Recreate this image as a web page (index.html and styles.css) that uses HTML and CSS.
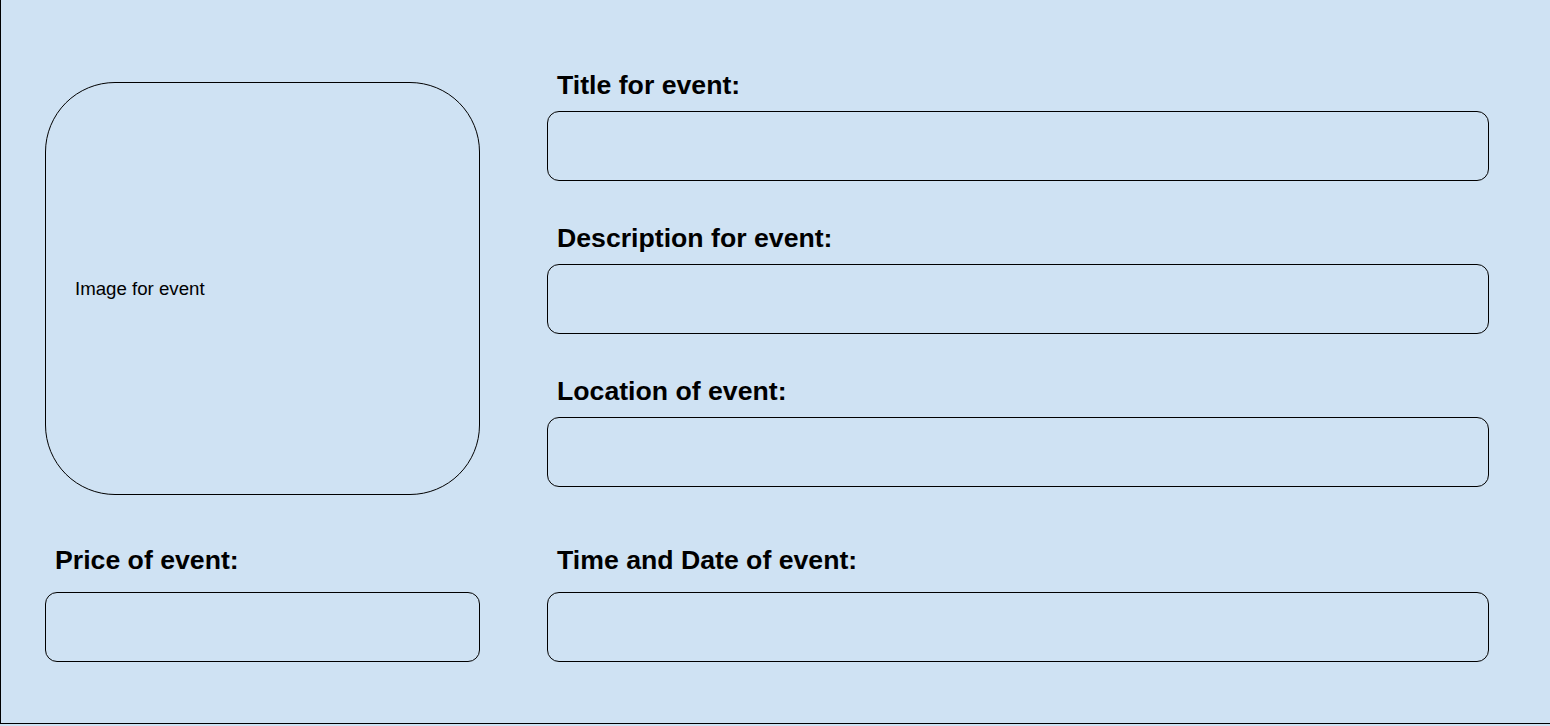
FILE: index.html
```html
<!DOCTYPE html>
<html lang="en">
<head>
<meta charset="utf-8">
<title>Create event</title>
<link rel="stylesheet" href="styles.css">
</head>
<body>
<main class="canvas">
  <div class="layout">
    <div class="image-box"><span class="image-text">Image for event</span></div>
    <div class="fields">
      <div class="field">
        <div class="label">Title for event:</div>
        <div class="box"></div>
      </div>
      <div class="field">
        <div class="label">Description for event:</div>
        <div class="box"></div>
      </div>
      <div class="field">
        <div class="label">Location of event:</div>
        <div class="box"></div>
      </div>
    </div>
    <div class="field field-bottom">
      <div class="label">Price of event:</div>
      <div class="box"></div>
    </div>
    <div class="field field-bottom">
      <div class="label">Time and Date of event:</div>
      <div class="box"></div>
    </div>
  </div>
</main>
</body>
</html>
```

FILE: styles.css
```css
html, body {
  margin: 0;
  padding: 0;
  background: #cfe2f3;
}

body {
  font-family: "Liberation Sans", Arial, sans-serif;
  color: #000;
}

.canvas {
  box-sizing: border-box;
  width: 1550px;
  height: 724px;
  background: #cfe2f3;
  border-left: 1px solid #000;
  border-bottom: 1px solid #000;
  padding: 70px 0 0 44px;
}

.layout {
  display: grid;
  grid-template-columns: 435px 942px;
  column-gap: 67px;
  row-gap: 50px;
  align-items: start;
}

.image-box {
  box-sizing: border-box;
  margin-top: 12px;
  height: 413px;
  border: 1px solid #000;
  border-radius: 70px;
  display: flex;
  align-items: center;
  padding-left: 29px;
}

.image-text {
  font-size: 18.67px;
  line-height: 22px;
}

.fields {
  display: flex;
  flex-direction: column;
  gap: 42px;
}

.field {
  display: flex;
  flex-direction: column;
  gap: 11px;
}

.field-bottom {
  gap: 17px;
}

.label {
  font-size: 26.67px;
  font-weight: bold;
  line-height: 30px;
  padding-left: 10px;
}

.box {
  box-sizing: border-box;
  height: 70px;
  border: 1px solid #000;
  border-radius: 12px;
}
```
